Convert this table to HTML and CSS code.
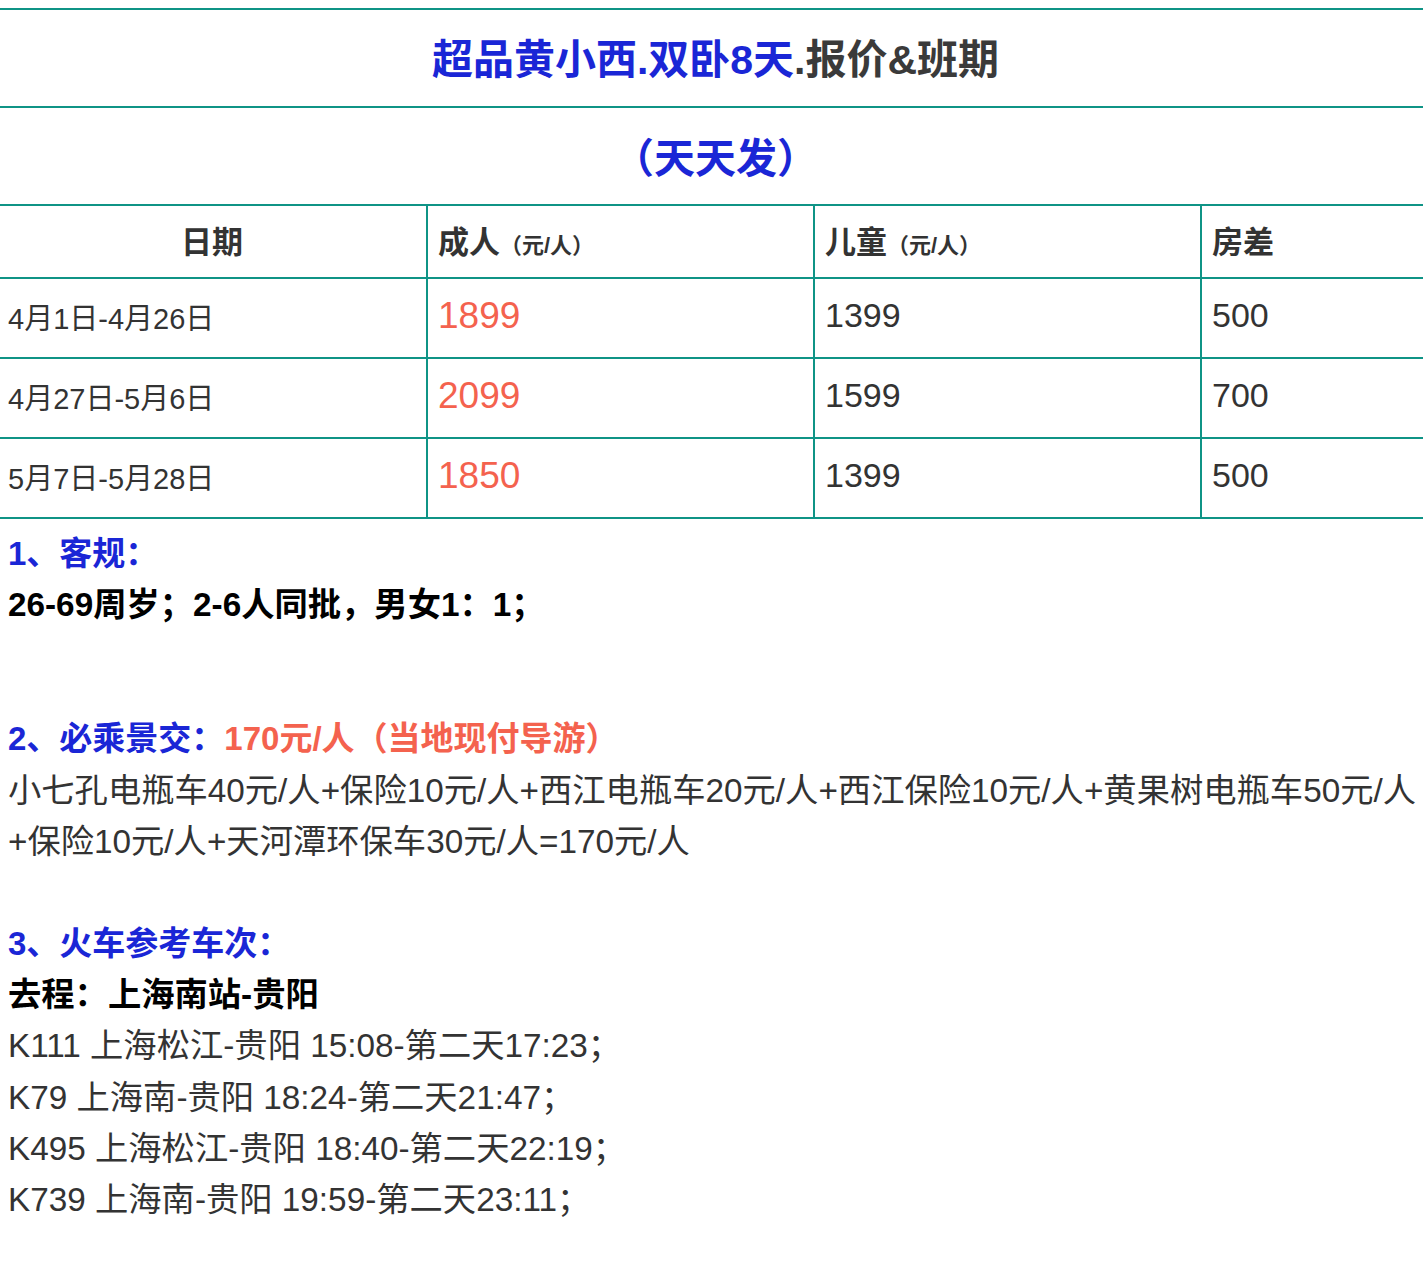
FILE: index.html
```html
<!DOCTYPE html>
<html lang="zh-CN">
<head>
<meta charset="utf-8">
<title>超品黄小西.双卧8天.报价&amp;班期</title>
<link rel="stylesheet" href="styles.css">
</head>
<body>
<table class="price">
  <colgroup>
    <col class="c1"><col class="c2"><col class="c3"><col class="c4">
  </colgroup>
  <tr class="title-row">
    <td colspan="4" class="title"><span class="blue">超品黄小西.双卧8天</span><span class="gray">.报价&amp;班期</span></td>
  </tr>
  <tr class="title-row">
    <td colspan="4" class="title"><span class="blue">（天天发）</span></td>
  </tr>
  <tr class="head-row">
    <th class="center">日期</th>
    <th>成人<small>（元/人）</small></th>
    <th>儿童<small>（元/人）</small></th>
    <th>房差</th>
  </tr>
  <tr class="data-row">
    <td class="date">4月1日-4月26日</td>
    <td class="adult">1899</td>
    <td class="num">1399</td>
    <td class="num">500</td>
  </tr>
  <tr class="data-row">
    <td class="date">4月27日-5月6日</td>
    <td class="adult">2099</td>
    <td class="num">1599</td>
    <td class="num">700</td>
  </tr>
  <tr class="data-row">
    <td class="date">5月7日-5月28日</td>
    <td class="adult">1850</td>
    <td class="num">1399</td>
    <td class="num">500</td>
  </tr>
</table>

<div class="notes">
  <section class="sec sec1">
    <p class="h">1、客规：</p>
    <p class="strong">26-69周岁；2-6人同批，男女1：1；</p>
  </section>
  <section class="sec sec2">
    <p class="h">2、必乘景交：<span class="red">170元/人（当地现付导游）</span></p>
    <p class="txt">小七孔电瓶车40元/人+保险10元/人+西江电瓶车20元/人+西江保险10元/人+黄果树电瓶车50元/人+保险10元/人+天河潭环保车30元/人=170元/人</p>
  </section>
  <section class="sec sec3">
    <p class="h">3、火车参考车次：</p>
    <p class="strong">去程：上海南站-贵阳</p>
    <p class="txt">K111 上海松江-贵阳 15:08-第二天17:23；</p>
    <p class="txt">K79 上海南-贵阳 18:24-第二天21:47；</p>
    <p class="txt">K495 上海松江-贵阳 18:40-第二天22:19；</p>
    <p class="txt">K739 上海南-贵阳 19:59-第二天23:11；</p>
  </section>
</div>
</body>
</html>
```
FILE: styles.css
```css
html, body {
  margin: 0;
  padding: 0;
  background: #fff;
}
body {
  font-family: "Liberation Sans", "Noto Sans CJK SC", sans-serif;
  color: #333;
  overflow-x: hidden;
}

.price {
  margin-top: 8px;
  width: 1423px;
  border-collapse: collapse;
  table-layout: fixed;
}
.price col.c1 { width: 427px; }
.price col.c2 { width: 387px; }
.price col.c3 { width: 387px; }
.price col.c4 { width: 222px; }

.price td, .price th {
  border: 2px solid #0f9486;
  padding: 0 10px;
  text-align: left;
  vertical-align: middle;
}
.price tr > :first-child { border-left: none; padding-left: 8px; }
.price tr > :last-child { border-right: none; }

.title-row td { height: 91px; }
.price .title {
  text-align: center;
  font-size: 41px;
  font-weight: bold;
  padding: 0 0 5px 3px;
}
.price .title-row + .title-row .title {
  height: 94px;
  padding-bottom: 2px;
}
.blue { color: #1a26d6; }
.gray { color: #3a3a3a; }

.head-row th {
  height: 66px;
  padding-bottom: 5px;
  font-size: 31px;
  font-weight: bold;
  color: #333;
}
.head-row th.center { text-align: center; }
.head-row small {
  font-size: 22px;
  font-weight: bold;
}

.data-row td {
  height: 73px;
  padding-bottom: 5px;
  color: #333;
}
.price .date { font-size: 29px; }
.price .adult { font-size: 37px; color: #f4624e; }
.price .num { font-size: 34px; }

.notes {
  padding: 9px 0 0 8px;
}
.notes p {
  margin: 0;
  line-height: 51.2px;
}
.sec1 { margin-bottom: 83px; }
.sec2 { margin-bottom: 51px; }
.h {
  font-size: 33px;
  font-weight: bold;
  color: #1a26d6;
}
.red { color: #f4624e; }
.strong {
  font-size: 33.3px;
  font-weight: bold;
  color: #000;
}
.txt {
  font-size: 33.3px;
  color: #333;
}
```
